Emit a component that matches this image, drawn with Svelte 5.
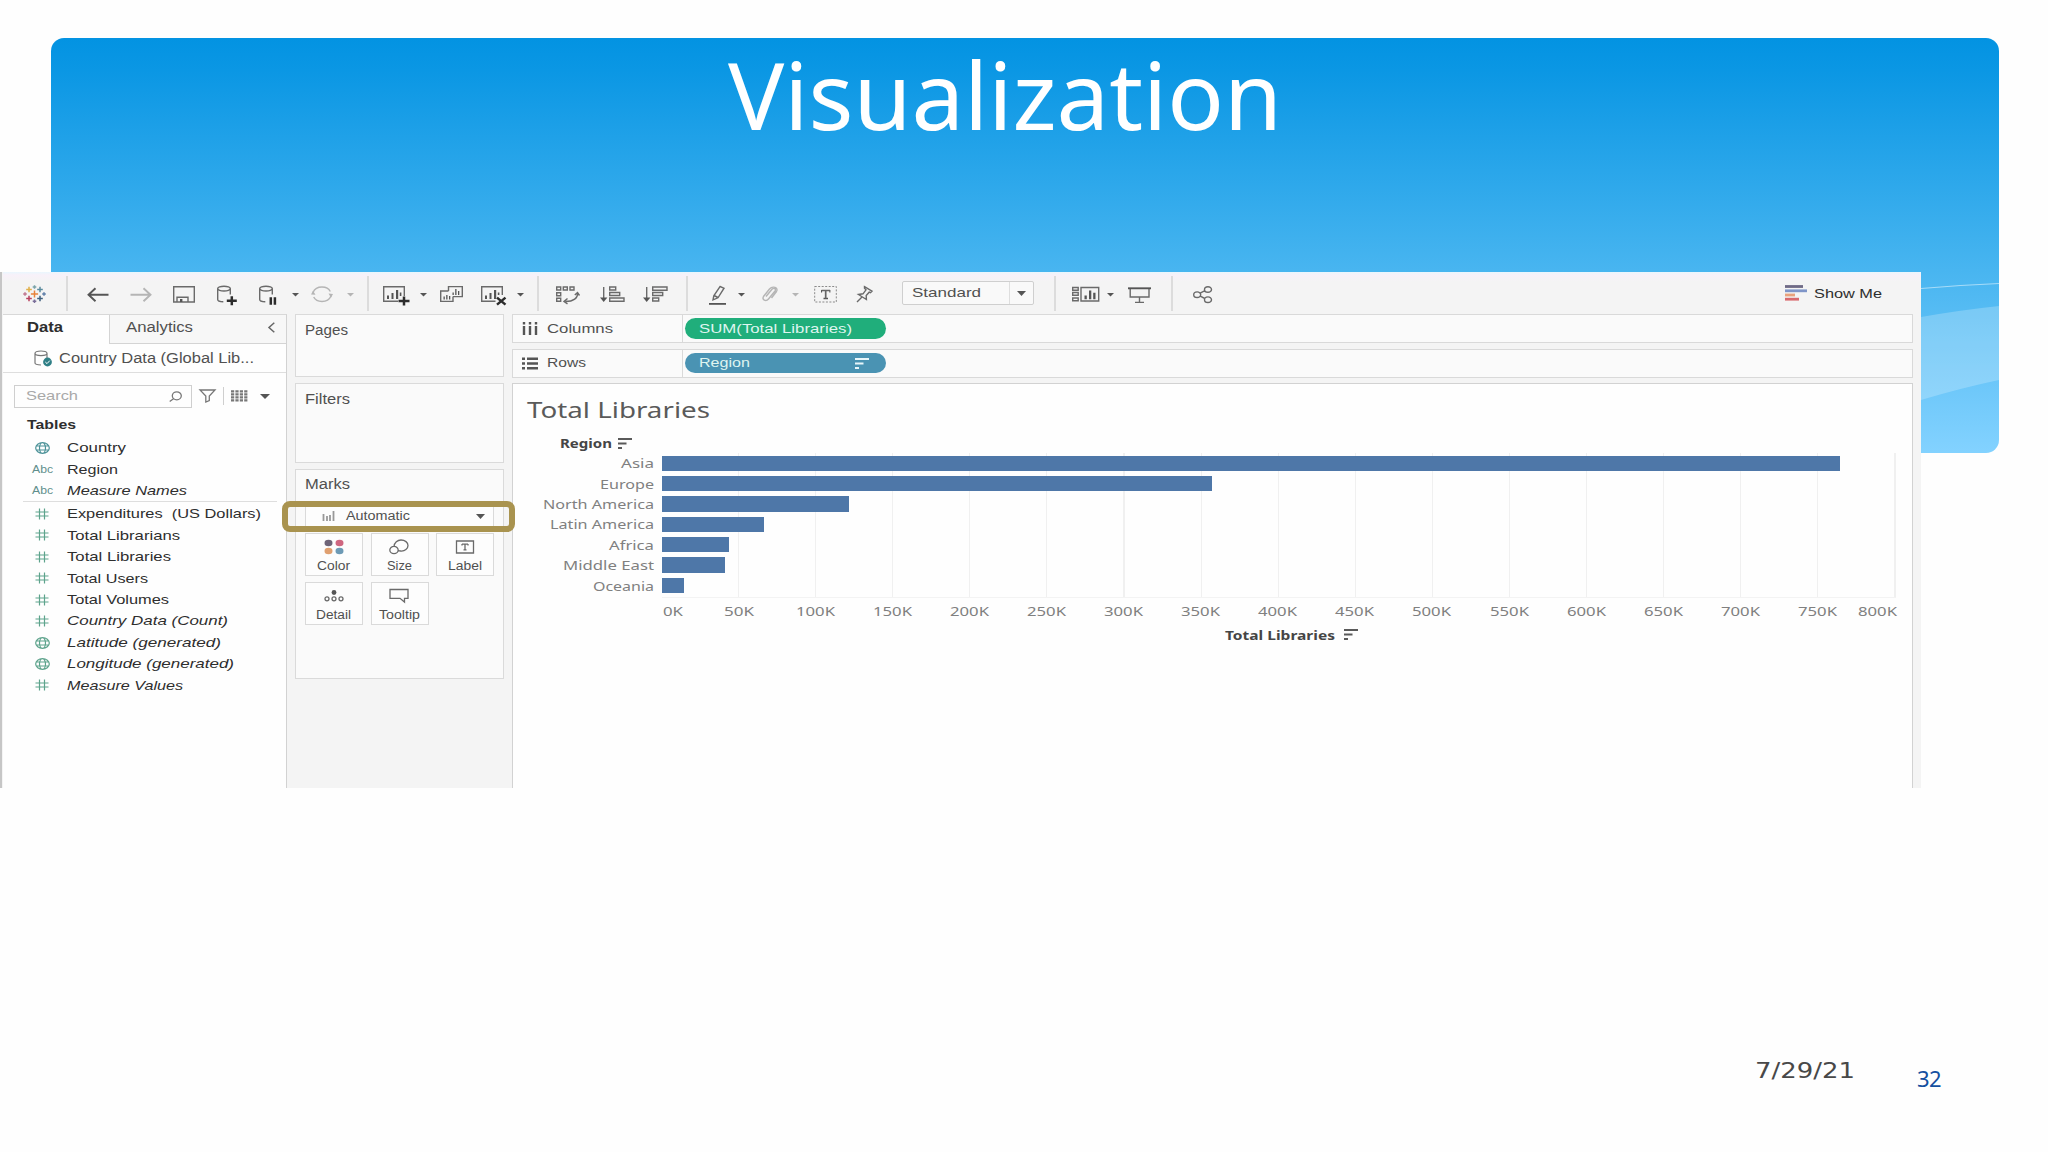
<script lang="ts">
  type Icon = { line?: string; bold?: string; fill?: string };
  type Tool = { icon: string; gap: number; width: number; dim?: boolean };
  type Field = { icon: "globe" | "abc" | "hash"; name: string; width: number; generated?: boolean; tone?: string };

  // closed ellipse as path data
  function oval(cx: number, cy: number, rx: number, ry = rx) {
    return `M${cx - rx} ${cy}a${rx} ${ry} 0 1 0 ${rx * 2} 0a${rx} ${ry} 0 1 0 ${-rx * 2} 0z`;
  }

  function box(x: number, y: number, w: number, h: number) {
    return `M${x} ${y}h${w}v${h}h${-w}z`;
  }

  const cylinder = oval(7, 4.6, 6.3, 2.4) + "M.7 4.6V15.4c0 1.3 2.4 2.2 5.6 2.3M13.3 4.6V10.5";

  const icons: Record<string, Icon> = {
    back: { bold: "M21.5 10.7H1.5M8.5 4.2L1.5 10.7L8.5 17.2" },
    forward: { bold: "M.5 10.7H20.5M13.5 4.2L20.5 10.7L13.5 17.2" },
    save: { line: box(0.7, 2.7, 20.6, 15.3) + "M4 18v-4.8h11V18", fill: box(7, 15, 2.4, 3) },
    addData: { line: cylinder, bold: "M9.8 16.7h10M14.8 12.2v9" },
    pauseData: { line: cylinder, bold: "M11.8 13.2v7.6M15.9 13.2v7.6" },
    refresh: {
      line: "M2 8.5C3.5 5 7 3 11 3c4 0 7 1.8 8.3 4.5M20 12c-1.5 3.5-5 5.5-9 5.5-4 0-7-1.8-8.3-4.5",
      fill: "M0 10.5L4.5 10.8L2 6.8zM22 10L17.5 9.6L20 13.8z"
    },
    addSheet: { line: "M15 17.3H.7V2.7H21.3V12", fill: box(4, 11.5, 2, 3.5) + box(8.5, 9, 2, 6) + box(13, 6, 2.2, 9) + box(16.8, 8.5, 1.6, 3.5), bold: "M15.5 17h11M21 12.6v8.8" },
    copySheet: { line: "M8.5 7V2.6H22.3V12.6H13M8.5 7H.7V17.4H13V12.6", fill: box(3.5, 12.5, 1.3, 3) + box(6.2, 11, 1.3, 4.5) + box(9, 12, 1.3, 3.5) + box(12.5, 8.5, 1.3, 2.5) + box(15.2, 5, 1.3, 6) + box(18, 7, 1.3, 4) },
    clearSheet: { line: "M14.5 17.3H.7V2.7H21.3V11", fill: box(4, 11.5, 2, 3.5) + box(8.5, 9, 2, 6) + box(13, 6, 2.2, 9) + box(16.8, 8.5, 1.6, 2.5), bold: "M16 13.6l8.5 7M24.5 13.6l-8.5 7" },
    swap: { line: box(0.7, 3, 4, 3) + box(7.3, 3, 4, 3) + box(14, 3, 4, 3) + box(0.7, 8.7, 4, 3) + box(0.7, 14.3, 4, 3) + "M21.5 9c.5 5-4 8.5-12 8.5M18.8 11l2.7-2.5 2 3M11.5 14.5l-3.5 3 3.5 2.3" },
    sortAsc: { line: "M3.7 3V15" + box(9.7, 3, 6, 3) + box(9.7, 8.5, 10, 3) + box(9.7, 14, 14.3, 3.2), fill: "M0 13.5H7.4L3.7 18z" },
    sortDesc: { line: "M3.7 3V15" + box(9.7, 3, 14.3, 3.2) + box(9.7, 8.5, 10, 3) + box(9.7, 14, 6, 3), fill: "M0 13.5H7.4L3.7 18z" },
    pen: { line: "M11 2.5l4 1.7-6 9.6-5 2 .8-4zM5 11.5l4 2", fill: box(0, 19, 17, 1.8) },
    clip: { line: "M5 12.5l6-7.2c2-2 4.5-.3 3 1.7L7.5 15c-2.5 3-7 1-5-2.5L8.5 5C11.5 1.5 18 3.5 15.5 7.5L10.5 14" },
    textBox: { bold: "M7.5 6.5h8.5M11.7 6.5v8", fill: box(9.5, 13.8, 4.5, 1.4) + box(7, 6, 1.1, 2.5) + box(15.3, 6, 1.1, 2.5) },
    pin: { line: "M8.5 2.7l7.5 4.5-1.5 1.5-1.3-.5-3 3.3.2 4L2.5 10.5l4.5-.7 3-4-1.5-1.5zM6 13L1 18" },
    fit: { line: box(0.7, 3.5, 5.5, 2.8) + box(0.7, 8.5, 5.5, 2.8) + box(0.7, 14, 5.5, 2.8) + box(9, 3.5, 17.7, 13.5), fill: box(12.5, 11.5, 2.3, 3.8) + box(17, 6.5, 2.3, 8.8) + box(21.2, 8.8, 2.3, 6.5) },
    present: { line: "M2.2 4.5V13H21V4.5M11.5 13v5.3M7 18.4h9", bold: "M0 4.3h23" },
    share: { line: oval(4.2, 10.7, 3.5, 2.8) + oval(15, 5.5, 3.5, 2.8) + oval(15, 15.7, 3.5, 2.8) + "M7.2 9.2l4.7-2.5M7.2 12.2l4.7 2.3" },
    caret: { fill: "M0 9H7L3.5 12.6z" },
    separator: {}
  };

  const toolsLeft: Tool[] = [
    { icon: "separator", gap: 20, width: 2 },
    { icon: "back", gap: 19, width: 22 },
    { icon: "forward", gap: 21, width: 22, dim: true },
    { icon: "save", gap: 21, width: 22 },
    { icon: "addData", gap: 22, width: 21 },
    { icon: "pauseData", gap: 21, width: 19 },
    { icon: "caret", gap: 14, width: 7 },
    { icon: "refresh", gap: 12, width: 22, dim: true },
    { icon: "caret", gap: 14, width: 7, dim: true },
    { icon: "separator", gap: 13, width: 2 },
    { icon: "addSheet", gap: 14, width: 27 },
    { icon: "caret", gap: 10, width: 7 },
    { icon: "copySheet", gap: 13, width: 23 },
    { icon: "clearSheet", gap: 18, width: 26 },
    { icon: "caret", gap: 10, width: 7 },
    { icon: "separator", gap: 13, width: 2 },
    { icon: "swap", gap: 17, width: 24 },
    { icon: "sortAsc", gap: 20, width: 25 },
    { icon: "sortDesc", gap: 18, width: 25 },
    { icon: "separator", gap: 18, width: 2 },
    { icon: "pen", gap: 21, width: 17 },
    { icon: "caret", gap: 12, width: 7 },
    { icon: "clip", gap: 16, width: 18, dim: true },
    { icon: "caret", gap: 13, width: 7, dim: true },
    { icon: "textBox", gap: 15, width: 23 },
    { icon: "pin", gap: 19, width: 17 }
  ];

  const toolsRight: Tool[] = [
    { icon: "separator", gap: 20, width: 2 },
    { icon: "fit", gap: 16, width: 28 },
    { icon: "caret", gap: 7, width: 7 },
    { icon: "present", gap: 14, width: 23 },
    { icon: "separator", gap: 20, width: 2 },
    { icon: "share", gap: 20, width: 20 }
  ];

  const dimensions: Field[] = [
    { icon: "globe", name: "Country", width: 59, tone: "blue" },
    { icon: "abc", name: "Region", width: 51 },
    { icon: "abc", name: "Measure Names", width: 120, generated: true }
  ];

  const measures: Field[] = [
    { icon: "hash", name: "Expenditures\u00a0 (US Dollars)", width: 194 },
    { icon: "hash", name: "Total Librarians", width: 113 },
    { icon: "hash", name: "Total Libraries", width: 104 },
    { icon: "hash", name: "Total Users", width: 81 },
    { icon: "hash", name: "Total Volumes", width: 102 },
    { icon: "hash", name: "Country Data (Count)", width: 161, generated: true },
    { icon: "globe", name: "Latitude (generated)", width: 154, generated: true },
    { icon: "globe", name: "Longitude (generated)", width: 167, generated: true },
    { icon: "hash", name: "Measure Values", width: 116, generated: true }
  ];

  const regions = [
    { name: "Asia", label: 33, bar: 1178 },
    { name: "Europe", label: 54, bar: 550 },
    { name: "North America", label: 111, bar: 187 },
    { name: "Latin America", label: 104, bar: 102 },
    { name: "Africa", label: 45, bar: 66.5 },
    { name: "Middle East", label: 91, bar: 62.5 },
    { name: "Oceania", label: 61, bar: 22 }
  ];

  const ticks = Array.from({ length: 17 }, (_, i) => `${i * 50}K`);
  const tickWidths: Record<number, number> = { 2: 20, 3: 30, 4: 39 };

  const sparks = [
    { x: 11.5, y: 10, r: 3.6, color: "#e8833a" },
    { x: 6, y: 5.5, r: 2.8, color: "#e0b04a" },
    { x: 17, y: 5.5, r: 2.8, color: "#5b8c9e" },
    { x: 6, y: 14.5, r: 2.8, color: "#b8405e" },
    { x: 17, y: 14.5, r: 2.8, color: "#3f5f7d" },
    { x: 11.5, y: 3, r: 1.8, color: "#7aa3a8" },
    { x: 11.5, y: 17.3, r: 1.8, color: "#7b6f9a" },
    { x: 2, y: 10, r: 1.8, color: "#c07890" },
    { x: 21, y: 10, r: 1.8, color: "#5f7fa8" }
  ];
</script>

{#snippet label(text: string, width: number, size = 13.3, kind = "")}
  <svg class="label {kind}" {width} height={size * 1.6} font-size={size}>
    <text y={size * 1.16} textLength={width} lengthAdjust="spacingAndGlyphs">{text}</text>
  </svg>
{/snippet}

{#snippet tool(t: Tool)}
  {#if t.icon === "separator"}
    <span class="separator" style="margin-left: {t.gap}px"></span>
  {:else}
    <svg class="tool" class:dim={t.dim} style="margin-left: {t.gap}px" width={t.width} height="20">
      {#if t.icon === "textBox"}
        <rect class="dashed" x=".7" y="2.5" width="21.6" height="15.5" />
      {/if}
      <path class="line" d={icons[t.icon].line ?? ""} />
      <path class="fill" d={icons[t.icon].fill ?? ""} />
      <path class="bold {t.icon}" d={icons[t.icon].bold ?? ""} />
    </svg>
  {/if}
{/snippet}

{#snippet sortIcon()}
  <svg class="sort" width="14" height="11">
    <path d="M0 1h14M0 5.5h8.5M0 10h4" />
  </svg>
{/snippet}

{#snippet fieldRow(f: Field)}
  <li class="field">
    <span class="field-icon {f.tone ?? ''}">
      {#if f.icon === "abc"}
        {@render label("Abc", 21, 10.5, "abc")}
      {:else if f.icon === "globe"}
        <svg width="15" height="12"><path d={oval(7.5, 6, 6.8, 5.3) + oval(7.5, 6, 3, 5.3) + "M1.5 4h12M1.5 8h12"} /></svg>
      {:else}
        <svg width="14" height="12"><path d="M4.5 .5v11M9.5 .5v11M.5 4h13M.5 8h13" /></svg>
      {/if}
    </span>
    {@render label(f.name, f.width, 13.3, f.generated ? "dark italic" : "dark")}
  </li>
{/snippet}

<main class="slide">
  <header class="banner">
    <svg class="wave" width="78" height="181">
      <path class="ribbon" d="M0 45Q40 38 78 34V108Q40 116 0 128z" />
      <path class="thread" d="M0 16.5Q40 13 78 11.5" />
    </svg>
    <h1>{@render label("Visualization", 554, 94, "heading")}</h1>
  </header>

  <section class="workbook">
    <nav class="toolbar">
      <svg class="logo" width="23" height="20">
        {#each sparks as s}
          <path d="M{s.x - s.r} {s.y}h{s.r * 2}M{s.x} {s.y - s.r}v{s.r * 2}" stroke={s.color} />
        {/each}
      </svg>
      {#each toolsLeft as t}
        {@render tool(t)}
      {/each}
      <div class="fit-select">
        <span class="fit-value">{@render label("Standard", 69)}</span>
        <svg class="caret" width="9" height="5"><path d="M0 0H9L4.5 5z" /></svg>
      </div>
      {#each toolsRight as t}
        {@render tool(t)}
      {/each}
      <div class="show-me">
        <svg width="22" height="16">
          <path d="M0 1.5h18" stroke="#6f6a86" />
          <path d="M0 5.8h22" stroke="#7f95c8" />
          <path d="M0 10h10" stroke="#e8a27c" />
          <path d="M0 14.2h14" stroke="#d86a6e" />
        </svg>
        {@render label("Show Me", 68, 13.3, "dark")}
      </div>
    </nav>

    <div class="columns">
      <aside class="data-pane">
        <div class="tabs">
          <div class="tab active">{@render label("Data", 36, 13.8, "dark strong")}</div>
          <div class="tab">
            {@render label("Analytics", 67, 13.8)}
            <svg class="collapse" width="7" height="11"><path d="M6.3 .8L1 5.5L6.3 10.2" /></svg>
          </div>
        </div>
        <div class="source">
          <svg width="19" height="17">
            <path class="line" d="M1 3.3a6 2.3 0 1 0 12 0a6 2.3 0 1 0-12 0V13c0 1 2 1.9 6 2M13 3.3V8" />
            <circle cx="13.5" cy="12" r="4.4" fill="#2f7f86" />
            <path d="M11.3 12l1.7 1.6 2.8-3" stroke="#fff" fill="none" />
          </svg>
          {@render label("Country Data (Global Lib...", 195, 13.8)}
        </div>
        <div class="finder">
          <div class="search">
            {@render label("Search", 52, 13.3, "muted")}
            <svg width="13" height="11"><path d={oval(7.8, 4.8, 4.5, 4) + "M4.5 7.8L.7 10.5"} /></svg>
          </div>
          <svg class="funnel" width="17" height="14"><path d="M1 1H16L10.3 7V11.5L6.8 13V7z" /></svg>
          <span class="rule"></span>
          <svg class="grid-view" width="17" height="12"><path d="M0 1.3h17M0 4.3h17M0 7.3h17M0 10.3h17" /></svg>
          <svg class="caret" width="10" height="5"><path d="M0 0H10L5 5z" /></svg>
        </div>
        <h2>{@render label("Tables", 49, 13.3, "dark strong")}</h2>
        <ul class="dimensions">
          {#each dimensions as f}
            {@render fieldRow(f)}
          {/each}
        </ul>
        <ul>
          {#each measures as f}
            {@render fieldRow(f)}
          {/each}
        </ul>
      </aside>

      <aside class="cards">
        <section class="card pages">{@render label("Pages", 43, 13.8)}</section>
        <section class="card filters">{@render label("Filters", 45, 13.8)}</section>
        <section class="card marks">
          {@render label("Marks", 45, 13.8)}
          <div class="mark-type">
            <svg width="13" height="10"><path d="M1.5 3v7M5 5v5M8 4v6M11.5 0v10" /></svg>
            {@render label("Automatic", 64, 12)}
            <svg class="caret" width="9" height="5"><path d="M0 0H9L4.5 5z" /></svg>
            <span class="highlight"></span>
          </div>
          <div class="mark-grid">
            <div class="mark">
              <svg width="20" height="16">
                <ellipse cx="4.5" cy="4" rx="4" ry="3.3" fill="#6e6478" />
                <ellipse cx="15.5" cy="4" rx="4" ry="3.3" fill="#cf6680" />
                <ellipse cx="4.5" cy="12" rx="4" ry="3.3" fill="#e0a070" />
                <ellipse cx="15.5" cy="12" rx="4" ry="3.3" fill="#6d9ab5" />
              </svg>
              {@render label("Color", 33, 12)}
            </div>
            <div class="mark">
              <svg class="outline" width="20" height="16"><path d={"M5 7.5C5.3 3.5 8.5 1 12 1c4 0 7 2.5 7 5.5s-3 6-7.5 5.5c-1 0-1.7-.3-2.3-.6" + oval(5, 11, 4.2, 3.6)} /></svg>
              {@render label("Size", 25, 12)}
            </div>
            <div class="mark">
              <svg class="outline" width="20" height="16"><path d="M1.5 2h17v12h-17zM7 5.2h6M10 5.2v5.6M8.5 10.9h3M7 5v1.6M13 5v1.6" /></svg>
              {@render label("Label", 34, 12)}
            </div>
            <div class="mark">
              <svg class="outline" width="20" height="16"><path d={oval(3, 10.8, 2) + oval(10, 10.8, 2) + oval(17, 10.8, 2)} /><circle cx="10" cy="4.5" r="2.4" fill="#555" /></svg>
              {@render label("Detail", 35, 12)}
            </div>
            <div class="mark">
              <svg class="outline" width="20" height="16"><path d="M1 1.5h18v8.8h-3.5v3.7l-4.5-3.7H1z" /></svg>
              {@render label("Tooltip", 41, 12)}
            </div>
          </div>
        </section>
      </aside>

      <div class="sheet">
        <div class="shelf">
          <div class="shelf-name">
            <svg width="16" height="13"><path d="M2 0v2.5M8 0v2.5M14 0v2.5M2 4v9M8 4v9M14 4v9" /></svg>
            {@render label("Columns", 66)}
          </div>
          <div class="pill green">{@render label("SUM(Total Libraries)", 153, 13.3, "light")}</div>
        </div>
        <div class="shelf">
          <div class="shelf-name">
            <svg width="16" height="13"><path d="M0 1.8h3M0 6.5h3M0 11.2h3M5 1.8h11M5 6.5h11M5 11.2h11" /></svg>
            {@render label("Rows", 39)}
          </div>
          <div class="pill blue">
            {@render label("Region", 51, 13.3, "light")}
            {@render sortIcon()}
          </div>
        </div>

        <section class="view">
          <div class="view-title">{@render label("Total Libraries", 183, 21.5, "chart")}</div>
          <div class="row-header">
            {@render label("Region", 52, 13, "chart strong")}
            {@render sortIcon()}
          </div>
          <div class="chart">
            <div class="names">
              {#each regions as r}
                <div class="name">{@render label(r.name, r.label, 13, "chart faint")}</div>
              {/each}
            </div>
            <div class="plot">
              {#each regions as r}
                <div class="track"><div class="bar" style="width: {r.bar}px"></div></div>
              {/each}
            </div>
          </div>
          <div class="axis">
            {#each ticks as tick}
              <div class="tick">{@render label(tick, tickWidths[tick.length], 12.8, "chart faint")}</div>
            {/each}
          </div>
          <div class="axis-title">
            {@render label("Total Libraries", 110, 12.8, "chart strong")}
            {@render sortIcon()}
          </div>
        </section>
      </div>
    </div>
  </section>

  <footer>
    <span class="date">{@render label("7/29/21", 100, 22, "date-text")}</span>
    <span class="page">32</span>
  </footer>
</main>

<style>
  :global(body) {
    background: #fff;
  }

  .slide {
    width: 2048px;
    height: 1152px;
    padding-top: 38px;
    box-sizing: border-box;
    overflow: hidden;
    background: #fefefe;
    font-family: "Liberation Sans", sans-serif;
  }

  svg {
    display: block;
    flex-shrink: 0;
    overflow: visible;
  }

  .label {
    fill: #505050;
  }

  .label.dark {
    fill: #2e2e2e;
  }

  .label.strong {
    font-weight: 700;
  }

  .label.italic {
    font-style: italic;
  }

  .label.muted {
    fill: #a9a9a9;
  }

  .label.light {
    fill: #dff5f0;
  }

  .label.abc {
    fill: #5f8f8c;
  }

  .label.chart {
    font-family: "Noto Sans", sans-serif;
    fill: #5a5a5a;
  }

  .label.chart.strong {
    fill: #454545;
  }

  .label.chart.faint {
    fill: #808080;
  }

  .label.heading {
    font-family: "Noto Sans", sans-serif;
    font-weight: 400;
    fill: #fff;
  }

  .label.date-text {
    font-family: "DejaVu Sans", sans-serif;
    fill: #484848;
  }

  .banner {
    position: relative;
    display: flex;
    align-items: flex-start;
    width: 1948px;
    height: 415px;
    margin-left: 51px;
    border-radius: 13px;
    background: linear-gradient(#0393e2 0%, #0b97e4 8%, #48b5f0 56%, #83d2ff 100%);
  }

  .banner h1 {
    margin: 0;
    padding: 0 0 0 677px;
  }

  .banner h1 svg {
    margin-top: -17px;
  }

  .wave {
    position: absolute;
    right: 0;
    top: 234px;
  }

  .ribbon {
    fill: rgba(255, 255, 255, 0.22);
  }

  .thread {
    fill: none;
    stroke: rgba(255, 255, 255, 0.5);
    stroke-width: 1.2;
  }

  .workbook {
    position: relative;
    display: flex;
    flex-direction: column;
    width: 1921px;
    height: 516px;
    margin-top: -181px;
    padding-left: 1px;
    box-sizing: border-box;
    border-left: 2px solid #c6c6c6;
    background: #f4f4f4;
  }

  .toolbar {
    display: flex;
    align-items: center;
    height: 42px;
    padding: 0 39px 0 20px;
    background: linear-gradient(#eaf6fd 0, #f8f1f9 3px, #f4f4f4 10px);
  }

  .toolbar > svg,
  .show-me {
    margin-top: 1px;
  }

  .logo path {
    stroke-width: 1.5;
  }

  .separator {
    flex-shrink: 0;
    width: 2px;
    height: 35px;
    background: #dcdcdc;
  }

  .tool .line {
    fill: none;
    stroke: #6a6a6a;
    stroke-width: 1.4;
  }

  .tool .fill {
    fill: #555;
  }

  .tool .bold {
    fill: none;
    stroke: #2c2c2c;
    stroke-width: 2.5;
  }

  .tool .bold.back,
  .tool .bold.forward,
  .tool .bold.present {
    stroke: #555;
    stroke-width: 1.9;
  }

  .tool .bold.textBox {
    stroke: #666;
    stroke-width: 1.7;
  }

  .tool .dashed {
    fill: none;
    stroke: #8a8a8a;
    stroke-dasharray: 2 1.5;
  }

  .tool.dim .line,
  .tool.dim .bold {
    stroke: #b5b5b5;
  }

  .tool.dim .fill {
    fill: #b5b5b5;
  }

  .caret {
    fill: #555;
  }

  .fit-select {
    display: flex;
    align-items: center;
    width: 132px;
    height: 24px;
    margin-left: 29px;
    box-sizing: border-box;
    border: 1.5px solid #cfcfcf;
    border-radius: 2px;
    background: #f9f9f9;
  }

  .fit-value {
    width: 107px;
    padding-left: 9px;
    box-sizing: border-box;
    border-right: 1px solid #dedede;
  }

  .fit-select .caret {
    margin-left: 7px;
  }

  .show-me {
    display: flex;
    align-items: center;
    gap: 7px;
    margin-left: auto;
  }

  .show-me path {
    stroke-width: 2.8;
  }

  .columns {
    display: flex;
    flex: 1;
    min-height: 0;
  }

  .data-pane {
    width: 284px;
    box-sizing: border-box;
    border-top: 1px solid #d8d8d8;
    border-right: 1.5px solid #d2d2d2;
    background: #fefefe;
  }

  .tabs {
    display: flex;
    height: 29px;
  }

  .tab {
    display: flex;
    flex: 1;
    align-items: center;
    justify-content: space-between;
    padding: 0 11px 3px 16px;
    border-left: 1px solid #d4d4d4;
    border-bottom: 1px solid #d4d4d4;
    background: #f7f7f7;
  }

  .tab.active {
    flex: 0 0 106px;
    box-sizing: border-box;
    padding-left: 23px;
    border-color: transparent;
    background: none;
  }

  .collapse path {
    fill: none;
    stroke: #666;
    stroke-width: 1.5;
  }

  .source {
    display: flex;
    align-items: center;
    gap: 6px;
    height: 29px;
    padding: 0 0 0 31px;
    box-sizing: border-box;
    border-bottom: 1px solid #dedede;
  }

  .source .line {
    fill: none;
    stroke: #777;
    stroke-width: 1.2;
  }

  .finder {
    display: flex;
    align-items: center;
    height: 24px;
    padding: 11px 0 0 11px;
  }

  .search {
    display: flex;
    align-items: center;
    justify-content: space-between;
    width: 178px;
    height: 23px;
    padding: 0 9px 0 11px;
    box-sizing: border-box;
    border: 1.5px solid #cfcfcf;
  }

  .search path,
  .funnel path {
    fill: none;
    stroke: #777;
    stroke-width: 1.3;
  }

  .funnel {
    margin-left: 7px;
  }

  .rule {
    width: 1px;
    height: 18px;
    margin: 0 7px;
    background: #cfcfcf;
  }

  .grid-view path {
    stroke: #777;
    stroke-width: 2.2;
    stroke-dasharray: 3.2 1.2;
  }

  .finder .caret {
    margin-left: 12px;
  }

  .data-pane h2 {
    height: 29px;
    margin: 0;
    padding: 6px 0 0 24px;
    box-sizing: border-box;
  }

  .data-pane ul {
    margin: 0;
    padding: 0;
    list-style: none;
  }

  .data-pane .dimensions {
    margin: 0 9px 1px 20px;
    border-bottom: 1px solid #dedede;
  }

  .field {
    display: flex;
    align-items: center;
    height: 21.43px;
    padding-left: 24px;
  }

  .dimensions .field {
    padding-left: 4px;
  }

  .field-icon {
    display: flex;
    justify-content: center;
    width: 30px;
    margin-right: 9.5px;
  }

  .field-icon path {
    fill: none;
    stroke: #5da38c;
    stroke-width: 1.2;
  }

  .field-icon.blue path {
    stroke: #4c9298;
  }

  .cards {
    width: 225px;
    padding: 0 8px 0 8px;
    box-sizing: border-box;
  }

  .card {
    padding: 4px 0 0 9px;
    box-sizing: border-box;
    border: 1.5px solid #dadada;
    background: #fafafa;
  }

  .pages {
    height: 63px;
    margin-bottom: 6px;
  }

  .filters {
    height: 80px;
    margin-bottom: 6px;
  }

  .marks {
    height: 210px;
    padding-top: 3px;
  }

  .mark-type {
    position: relative;
    display: flex;
    align-items: center;
    width: 189px;
    height: 22px;
    margin-top: 11px;
    padding: 0 8px 2px 16px;
    box-sizing: border-box;
    border: 1px solid #dadada;
    background: #fdfdfd;
  }

  .mark-type path:not(.caret path) {
    stroke: #999;
    stroke-width: 1.8;
  }

  .mark-type .label {
    margin-left: 11px;
  }

  .mark-type .caret {
    margin-left: auto;
  }

  .highlight {
    position: absolute;
    left: -24px;
    top: -6px;
    width: 233px;
    height: 31px;
    box-sizing: border-box;
    border: 6px solid #a9934f;
    border-radius: 8px;
  }

  .mark-grid {
    display: grid;
    grid-template-columns: repeat(3, 58px);
    gap: 6px 7.5px;
    margin-top: 5px;
  }

  .mark {
    display: flex;
    flex-direction: column;
    align-items: center;
    gap: 1px;
    height: 43px;
    padding: 5px 1px 0 0;
    box-sizing: border-box;
    border: 1.5px solid #dadada;
    background: #fdfdfd;
  }

  .outline path {
    fill: none;
    stroke: #6a6a6a;
    stroke-width: 1.3;
  }

  .sheet {
    display: flex;
    flex-direction: column;
    width: 1401px;
  }

  .shelf {
    display: flex;
    align-items: center;
    height: 29px;
    margin-bottom: 5.5px;
    flex-shrink: 0;
    box-sizing: border-box;
    border: 1.5px solid #d9d9d9;
    background: #fafafa;
  }

  .shelf-name {
    display: flex;
    align-items: center;
    gap: 9px;
    width: 170px;
    height: 100%;
    padding-left: 8.5px;
    box-sizing: border-box;
    border-right: 1px solid #d9d9d9;
  }

  .shelf-name path {
    stroke: #555;
    stroke-width: 2.4;
  }

  .pill {
    display: flex;
    align-items: center;
    justify-content: space-between;
    width: 201px;
    height: 20.5px;
    margin-left: 2px;
    padding: 0 17px 0 14px;
    box-sizing: border-box;
    border-radius: 11px;
  }

  .pill.green {
    background: #20ae7b;
  }

  .pill.blue {
    background: #4a93b3;
  }

  .sort path {
    stroke: #5a5a5a;
    stroke-width: 2;
  }

  .pill .sort path {
    stroke: #e8f6fa;
  }

  .view {
    flex: 1;
    min-height: 0;
    padding-top: 8.5px;
    box-sizing: border-box;
    border: 1.5px solid #d2d2d2;
    border-bottom: 0;
    background: #fefefe;
  }

  .view-title {
    height: 34px;
    padding-left: 14px;
  }

  .row-header {
    display: flex;
    align-items: center;
    gap: 6px;
    height: 26.5px;
    padding: 8px 0 0 47px;
    box-sizing: border-box;
  }

  .chart {
    display: flex;
  }

  .names {
    width: 149px;
    padding: 0.5px 8px 0 0;
    box-sizing: border-box;
  }

  .name {
    display: flex;
    align-items: center;
    justify-content: flex-end;
    height: 20.4px;
  }

  .plot {
    width: 1234px;
    padding-bottom: 1px;
    border-bottom: 1px solid #f3f3f3;
    background: repeating-linear-gradient(to right, transparent 0 76px, #f0f0f0 76px 77.1px);
  }

  .track {
    display: flex;
    align-items: center;
    height: 20.4px;
  }

  .bar {
    height: 15.4px;
    background: #4e77a8;
  }

  .axis {
    display: flex;
    height: 26px;
    margin-left: 110px;
  }

  .tick {
    display: flex;
    align-items: center;
    justify-content: center;
    flex: 0 0 77.06px;
    box-sizing: border-box;
  }

  .tick:first-child {
    padding-left: 23px;
  }

  .tick:last-child {
    padding-right: 33px;
  }

  .axis-title {
    display: flex;
    align-items: center;
    gap: 9px;
    height: 22px;
    padding-left: 712px;
  }

  footer {
    display: flex;
    align-items: flex-start;
    padding: 264px 0 0 1755px;
  }

  .date {
    width: 162px;
  }

  .page {
    margin-top: 11px;
    font: 22px/30px "Noto Sans", sans-serif;
    color: #1550a0;
    letter-spacing: -0.6px;
  }
</style>
